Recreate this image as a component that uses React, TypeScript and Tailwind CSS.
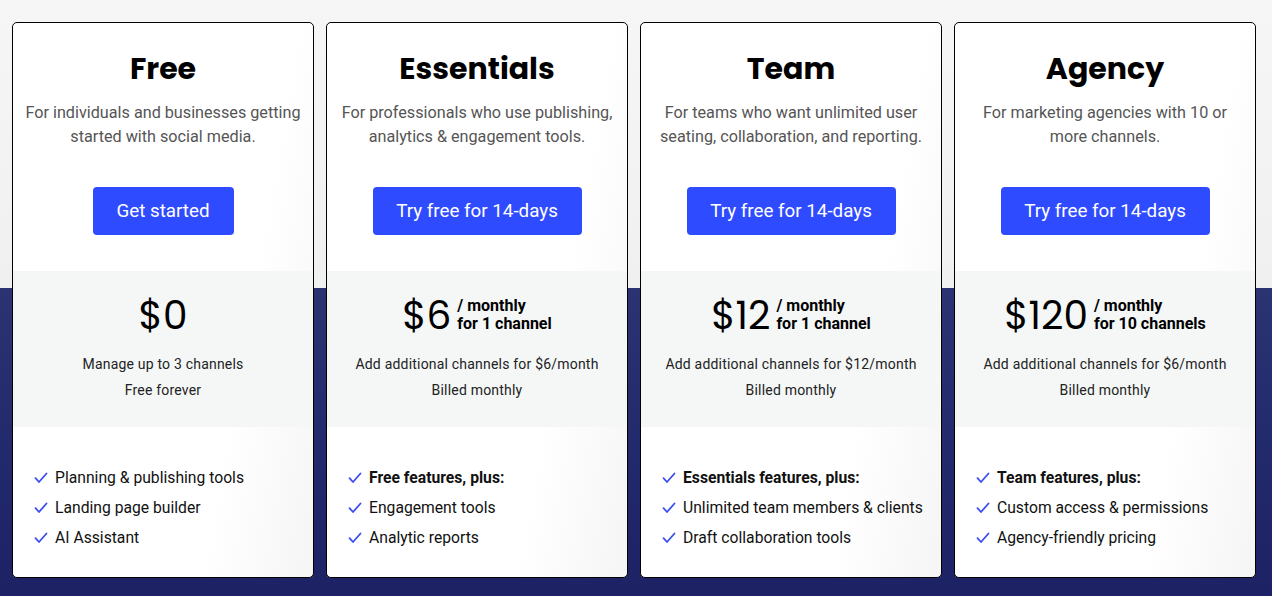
import React from "react";

type Plan = {
  name: string;
  desc: string[];
  cta: string;
  ctaW: string;
  price: string;
  per?: string[];
  notes: string[];
  features: { text: string; bold?: boolean }[];
};

const plans: Plan[] = [
  {
    name: "Free",
    desc: ["For individuals and businesses getting", "started with social media."],
    cta: "Get started",
    ctaW: "w-[141px]",
    price: "0",
    notes: ["Manage up to 3 channels", "Free forever"],
    features: [
      { text: "Planning & publishing tools" },
      { text: "Landing page builder" },
      { text: "AI Assistant" },
    ],
  },
  {
    name: "Essentials",
    desc: ["For professionals who use publishing,", "analytics & engagement tools."],
    cta: "Try free for 14-days",
    ctaW: "w-[209px]",
    price: "6",
    per: ["/ monthly", "for 1 channel"],
    notes: ["Add additional channels for $6/month", "Billed monthly"],
    features: [
      { text: "Free features, plus:", bold: true },
      { text: "Engagement tools" },
      { text: "Analytic reports" },
    ],
  },
  {
    name: "Team",
    desc: ["For teams who want unlimited user", "seating, collaboration, and reporting."],
    cta: "Try free for 14-days",
    ctaW: "w-[209px]",
    price: "12",
    per: ["/ monthly", "for 1 channel"],
    notes: ["Add additional channels for $12/month", "Billed monthly"],
    features: [
      { text: "Essentials features, plus:", bold: true },
      { text: "Unlimited team members & clients" },
      { text: "Draft collaboration tools" },
    ],
  },
  {
    name: "Agency",
    desc: ["For marketing agencies with 10 or", "more channels."],
    cta: "Try free for 14-days",
    ctaW: "w-[209px]",
    price: "120",
    per: ["/ monthly", "for 10 channels"],
    notes: ["Add additional channels for $6/month", "Billed monthly"],
    features: [
      { text: "Team features, plus:", bold: true },
      { text: "Custom access & permissions" },
      { text: "Agency-friendly pricing" },
    ],
  },
];

function Check() {
  return (
    <svg width="14" height="12" viewBox="0 0 14 12" className="shrink-0">
      <path d="M1.5 6.2 L5 10 L12.5 1.5" fill="none" stroke="#3b4cf0" strokeWidth="1.8" strokeLinecap="round" strokeLinejoin="round" />
    </svg>
  );
}

function Card({ p }: { p: Plan }) {
  return (
    <div className="w-[302px] h-[556px] rounded-[5px] border border-black bg-white bg-[linear-gradient(100deg,#ffffff_72%,#f5f5f5_100%)] overflow-hidden flex flex-col">
      <div className="flex flex-col items-center pt-[26px] h-[248px]">
        <h2 className="text-[30px] leading-[40px] font-bold text-black font-['Poppins',Inter,sans-serif]">
          {p.name}
        </h2>
        <p className="mt-[12px] text-[16.2px] leading-[24px] text-[#555] text-center font-['Roboto',sans-serif]">
          {p.desc[0]}
          <br />
          {p.desc[1]}
        </p>
        <button className={`mt-[38px] h-[48px] ${p.ctaW} rounded-[4px] bg-[#2f4bff] text-white text-[18.8px] font-['Roboto',sans-serif]`}>
          {p.cta}
        </button>
      </div>
      <div className="h-[156px] bg-[#f5f7f7] flex flex-col items-center pt-[22px]">
        <div className="flex items-center h-[46px]">
          <span className="text-[39px] leading-[46px] text-black font-['Poppins',Inter,sans-serif]">
            ${p.price}
          </span>
          {p.per && (
            <span className="ml-[6px] mt-[-2px] text-[16px] leading-[18px] font-bold text-black font-['Roboto',sans-serif]">
              {p.per[0]}
              <br />
              {p.per[1]}
            </span>
          )}
        </div>
        <div className="mt-[12px] text-[14px] leading-[26px] text-[#222] text-center tracking-[0.2px] font-['Roboto',sans-serif]">
          <div>{p.notes[0]}</div>
          <div>{p.notes[1]}</div>
        </div>
      </div>
      <ul className="pt-[39px] pl-[21px] flex flex-col gap-[6px] font-['Roboto',sans-serif]">
        {p.features.map((f) => (
          <li key={f.text} className="flex items-center gap-[7px] h-[24px] text-[15.7px] text-[#111]">
            <Check />
            <span className={f.bold ? "font-bold" : ""}>{f.text}</span>
          </li>
        ))}
      </ul>
    </div>
  );
}

export default function App() {
  return (
    <div className="w-[1272px] h-[596px] overflow-hidden bg-[linear-gradient(to_bottom,#f6f6f6_0px,#f0f0f0_288px,#2b3373_288px,#1c2264_596px)]">
      <div className="flex gap-[12px] pl-[12px] pt-[22px]">
        {plans.map((p) => (
          <Card key={p.name} p={p} />
        ))}
      </div>
    </div>
  );
}
